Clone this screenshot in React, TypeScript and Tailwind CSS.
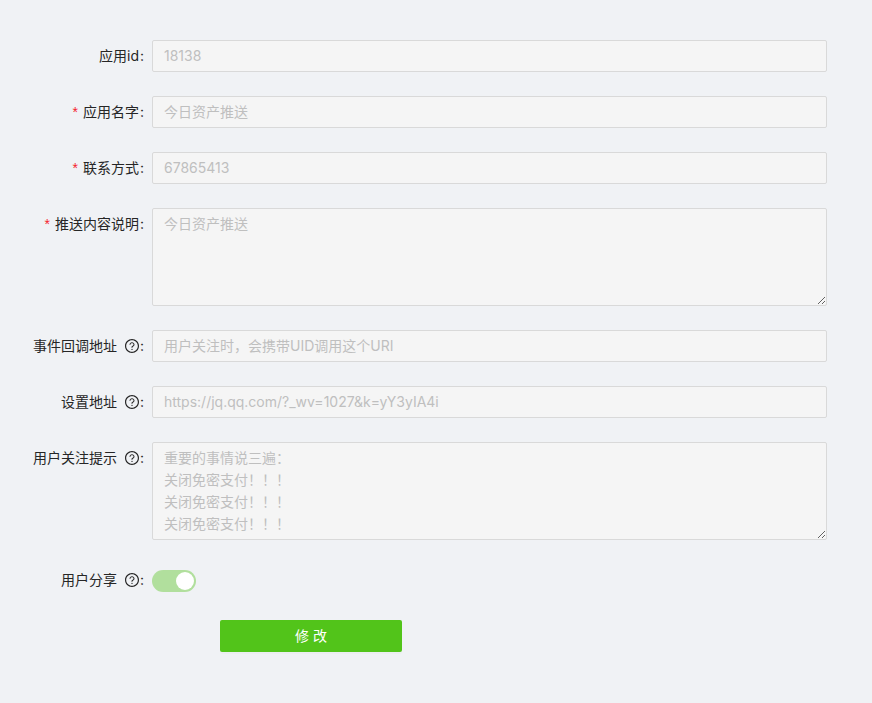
import type { ReactNode } from 'react'

const FONT = 'font-["Inter","Noto_Sans_CJK_SC",sans-serif]'
const FIELD =
  'w-full rounded-[2px] border border-[#d9d9d9] bg-[#f5f5f5] px-[11px] text-sm leading-[22px] text-[#bfbfbf] outline-none'

function HelpIcon() {
  return (
    <svg viewBox="0 0 1024 1024" width="16" height="16" fill="#262626" className="ml-[7px] shrink-0">
      <path d="M512 64C264.6 64 64 264.6 64 512s200.6 448 448 448 448-200.6 448-448S759.4 64 512 64zm0 820c-205.4 0-372-166.6-372-372s166.6-372 372-372 372 166.6 372 372-166.6 372-372 372z" />
      <path d="M623.6 316.7C593.6 290.4 554 276 512 276s-81.6 14.500-111.600 40.700C369.200 344 352 380.700 352 420v7.600c0 4.400 3.600 8 8 8h48c4.400 0 8-3.600 8-8V420c0-44.100 43.100-80 96-80s96 35.900 96 80c0 31.100-22 59.600-56.100 72.700-21.200 8.100-39.200 22.300-52.100 40.900-13.100 19-19.900 41.800-19.900 64.900V620c0 4.400 3.600 8 8 8h48c4.400 0 8-3.600 8-8v-22.700a48.300 48.300 0 0 1 30.900-44.800c59-22.700 97.100-74.700 97.100-132.500.100-39.300-17.100-76-48.300-103.300zM472 732a40 40 0 1 0 80 0 40 40 0 1 0-80 0z" />
    </svg>
  )
}

function Row({
  label,
  required,
  help,
  children,
  className,
}: {
  label: string
  required?: boolean
  help?: boolean
  children: ReactNode
  className?: string
}) {
  return (
    <div className={`flex items-start ${className ?? 'mb-6'}`}>
      <div className="flex h-8 w-[152px] shrink-0 items-center justify-end text-sm text-[#262626]">
        {required && <span className="mr-[5px] font-['Liberation_Sans',sans-serif] text-[#f5222d]">*</span>}
        <span>{label}</span>
        {help && <HelpIcon />}
        <span className={help ? 'mr-2 w-1' : 'ml-[1px] mr-2 w-1'}>:</span>
      </div>
      <div className="min-w-0 flex-1">{children}</div>
    </div>
  )
}

function TextInput({ value }: { value: string }) {
  return <input disabled defaultValue={value} className={`${FIELD} h-8 pb-[5px] pt-[3px] ${FONT}`} />
}

function TextArea({ value }: { value: string }) {
  return <textarea disabled defaultValue={value} className={`${FIELD} block h-[98px] resize-y py-1 ${FONT}`} />
}

export default function App() {
  return (
    <div className={`min-h-[703px] bg-[#f0f2f5] pb-[51px] pl-0 pr-[45px] pt-10 ${FONT}`}>
      <Row label="应用id">
        <TextInput value="18138" />
      </Row>
      <Row label="应用名字" required>
        <TextInput value="今日资产推送" />
      </Row>
      <Row label="联系方式" required>
        <TextInput value="67865413" />
      </Row>
      <Row label="推送内容说明" required>
        <TextArea value="今日资产推送" />
      </Row>
      <Row label="事件回调地址" help>
        <TextInput value="用户关注时，会携带UID调用这个URI" />
      </Row>
      <Row label="设置地址" help>
        <TextInput value="https://jq.qq.com/?_wv=1027&k=yY3yIA4i" />
      </Row>
      <Row label="用户关注提示" help>
        <TextArea value={'重要的事情说三遍：\n关闭免密支付！！！\n关闭免密支付！！！\n关闭免密支付！！！'} />
      </Row>
      <Row label="用户分享" help className="mb-6">
        <div className="flex h-8 items-center pt-[2px]">
          <div className="flex h-[22px] w-11 items-center justify-end rounded-full bg-[#52c41a]/40 p-[2px]">
            <div className="size-[18px] rounded-full bg-white" />
          </div>
        </div>
      </Row>
      <button className="ml-[220px] block h-8 w-[182px] rounded-[2px] bg-[#52c41a] text-sm text-white shadow-[0_2px_0_rgba(0,0,0,0.015)]">
        修 改
      </button>
    </div>
  )
}
